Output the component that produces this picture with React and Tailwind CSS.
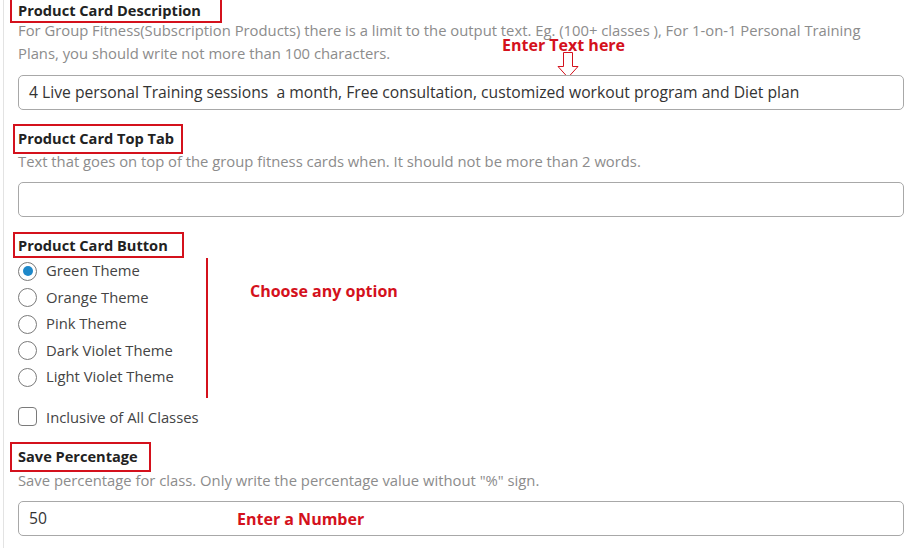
const themes = [
  "Green Theme",
  "Orange Theme",
  "Pink Theme",
  "Dark Violet Theme",
  "Light Violet Theme",
];

function TitleBox({ children, className }) {
  return (
    <div
      className={`flex items-center border-2 border-[#d4111c] text-[14.6px] font-bold text-[#222] ${className}`}
    >
      {children}
    </div>
  );
}

function TextField({ value, children }) {
  return (
    <div className="relative flex items-center h-[35px] rounded-[5px] border border-[#a8a8a8] bg-white pl-[10px] text-[15.7px] text-[#333] whitespace-pre">
      {value}
      {children}
    </div>
  );
}

export default function App() {
  return (
    <div
      className="h-[551px] overflow-hidden bg-white"
      style={{ fontFamily: '"Open Sans", "Noto Sans", sans-serif' }}
    >
      <div className="ml-[3px] h-full border-l border-[#e3e3e3] pl-[14px] pr-[9px]">
        {/* Product Card Description */}
        <div className="relative">
          <TitleBox className="-mt-[3px] -ml-[8px] w-[212px] h-[26px] pl-[6px] pt-[2px]">
            Product Card Description
          </TitleBox>
          <p className="-mt-[4px] text-[14.8px] leading-[23px] text-[#8c8c8c]">
            For Group Fitness(Subscription Products) there is a limit to the
            output text. Eg. (100+ classes ), For 1-on-1 Personal Training
            Plans, you should write not more than 100 characters.
          </p>
          <span className="absolute left-[484px] top-[36px] text-[16px] font-bold text-[#d4111c]">
            Enter Text here
          </span>
          <svg
            className="absolute left-[539px] top-[55px]"
            width="22"
            height="26"
            viewBox="0 0 22 26"
            fill="none"
            stroke="#d4111c"
            strokeWidth="1"
          >
            <path d="M6.5 0.5 H15.5 V14.5 H21 L11 25.5 L1 14.5 H6.5 Z" />
          </svg>
          <div className="mt-[10px]">
            <TextField value="4 Live personal Training sessions  a month, Free consultation, customized workout program and Diet plan" />
          </div>
        </div>

        {/* Product Card Top Tab */}
        <TitleBox className="mt-[14px] -ml-[5px] w-[170px] h-[30px] pl-[3px]">
          Product Card Top Tab
        </TitleBox>
        <p className="-mt-[4px] text-[14.8px] leading-[23px] text-[#8c8c8c]">
          Text that goes on top of the group fitness cards when. It should not
          be more than 2 words.
        </p>
        <div className="mt-[9px]">
          <TextField value="" />
        </div>

        {/* Product Card Button */}
        <TitleBox className="mt-[15px] -ml-[5px] w-[171px] h-[26px] pl-[3px] pt-[2px]">
          Product Card Button
        </TitleBox>
        <div className="flex items-start">
          <div className="w-[188px] flex flex-col">
            {themes.map((t, i) => (
              <label
                key={t}
                className="flex items-center h-[26.5px] text-[14.8px] text-[#444]"
              >
                <span className="flex items-center justify-center w-[19px] h-[19px] rounded-full border border-[#7a7a7a] bg-white">
                  {i === 0 && (
                    <span className="w-[10px] h-[10px] rounded-full bg-[#1e88c9]" />
                  )}
                </span>
                <span className="ml-[9px] -mt-[2px]">{t}</span>
              </label>
            ))}
          </div>
          <div className="w-[2px] h-[140px] bg-[#d4111c]" />
          <span className="ml-[42px] mt-[21px] text-[16px] font-bold text-[#d4111c]">
            Choose any option
          </span>
        </div>
        <label className="mt-[7px] flex items-center h-[22px] text-[14.8px] text-[#444]">
          <span className="w-[19px] h-[19px] rounded-[4px] border border-[#7a7a7a] bg-white" />
          <span className="ml-[9px] pt-[3px]">Inclusive of All Classes</span>
        </label>

        {/* Save Percentage */}
        <TitleBox className="mt-[15px] -ml-[8px] w-[141px] h-[30px] pl-[6px]">
          Save Percentage
        </TitleBox>
        <p className="-mt-[3px] text-[14.8px] leading-[23px] text-[#8c8c8c]">
          Save percentage for class. Only write the percentage value without
          "%" sign.
        </p>
        <div className="mt-[9px]">
          <TextField value="50">
            <span className="absolute left-[218px] text-[16px] font-bold text-[#d4111c]">
              Enter a Number
            </span>
          </TextField>
        </div>
      </div>
    </div>
  );
}
